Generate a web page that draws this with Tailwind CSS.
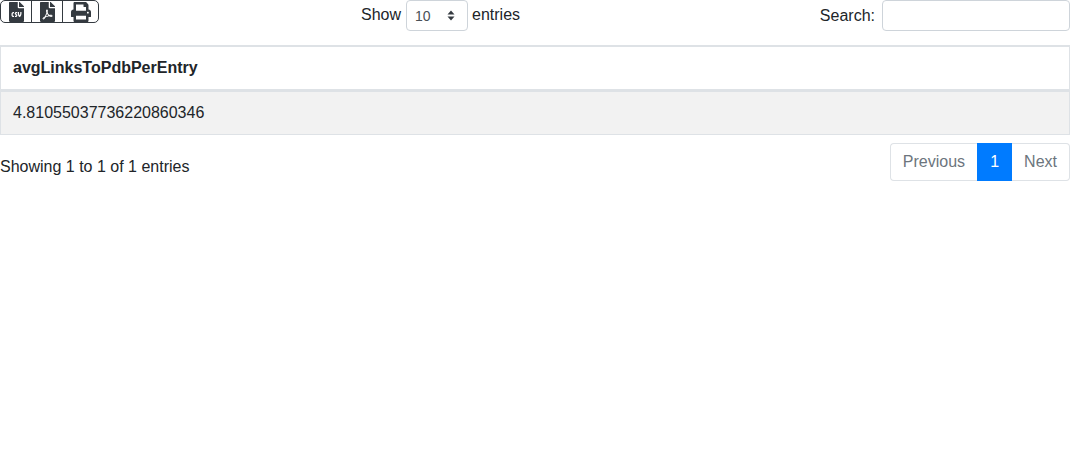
<!DOCTYPE html>
<html lang="en">
<head>
    <meta charset="UTF-8">
    <title>avgLinksToPdbPerEntry</title>
    <script src="https://cdn.jsdelivr.net/npm/@tailwindcss/browser@4"></script>
</head>
<body class="bg-white text-[#212529] font-['Liberation_Sans',Arial,sans-serif] text-base leading-6">
    <div class="w-[1070px]">
        <!-- toolbar -->
        <div class="flex h-[45px] items-start">
            <div class="w-[361px] flex">
                <div class="flex h-[23px] border border-[#343a40] rounded-[5px] overflow-hidden">
                    <button class="w-[31px] border-r border-[#343a40] flex justify-center pt-[1px]">
                        <svg class="w-[15px] h-[20px] fill-[#343a40]" viewBox="0 0 384 512"><path d="M224 136V0H24C10.7 0 0 10.7 0 24v464c0 13.3 10.7 24 24 24h336c13.3 0 24-10.7 24-24V160H248c-13.2 0-24-10.8-24-24zm-96 144c0 4.42-3.58 8-8 8h-8c-8.84 0-16 7.16-16 16v32c0 8.84 7.16 16 16 16h8c4.42 0 8 3.58 8 8v16c0 4.42-3.58 8-8 8h-8c-26.51 0-48-21.49-48-48v-32c0-26.51 21.49-48 48-48h8c4.42 0 8 3.58 8 8v16zm44.27 104H160c-4.42 0-8-3.58-8-8v-16c0-4.42 3.58-8 8-8h12.27c5.95 0 10.41-3.5 10.41-6.62 0-1.3-.75-2.66-2.12-3.84l-21.89-18.77c-8.47-7.22-13.33-17.48-13.33-28.14 0-21.3 19.02-38.62 42.41-38.62H200c4.42 0 8 3.58 8 8v16c0 4.42-3.58 8-8 8h-12.27c-5.95 0-10.41 3.5-10.41 6.62 0 1.3.75 2.66 2.12 3.84l21.89 18.77c8.47 7.22 13.33 17.48 13.33 28.14.01 21.29-19 38.62-42.39 38.62zM256 264v20.8c0 20.27 5.7 40.17 16 56.88 10.3-16.7 16-36.61 16-56.88V264c0-4.42 3.58-8 8-8h16c4.42 0 8 3.58 8 8v20.8c0 35.48-12.88 68.89-36.28 94.09-3.02 3.25-7.27 5.11-11.72 5.11s-8.7-1.86-11.72-5.11c-23.4-25.2-36.28-58.61-36.28-94.09V264c0-4.42 3.58-8 8-8h16c4.42 0 8 3.58 8 8zm121-159L279.1 7c-4.5-4.5-10.6-7-17-7H256v128h128v-6.1c0-6.3-2.5-12.4-7-16.9z"/></svg>
                    </button>
                    <button class="w-[31px] border-r border-[#343a40] flex justify-center pt-[1px]">
                        <svg class="w-[15px] h-[20px] fill-[#343a40]" viewBox="0 0 384 512"><path d="M181.9 256.1c-5-16-4.9-46.9-2-46.9 8.4 0 7.6 36.9 2 46.9zm-1.7 47.2c-7.7 20.2-17.3 43.3-28.4 62.7 18.3-7 39-17.2 62.9-21.9-12.7-9.6-24.9-23.4-34.5-40.8zM86.1 428.1c0 .8 13.2-5.4 34.9-40.2-6.7 6.3-29.1 24.5-34.9 40.2zM248 160h136v328c0 13.3-10.7 24-24 24H24c-13.3 0-24-10.7-24-24V24C0 10.7 10.7 0 24 0h200v136c0 13.2 10.8 24 24 24zm-8 171.8c-20-12.2-33.3-29-42.7-53.8 4.5-18.5 11.6-46.6 6.2-64.2-4.7-29.4-42.4-26.5-47.8-6.8-5 18.3-.4 44.1 8.1 77-11.6 27.6-28.7 64.6-40.8 85.8-.1 0-.1.1-.2.1-27.1 13.9-73.6 44.5-54.5 68 5.6 6.9 16 10 21.5 10 17.9 0 35.7-18 61.1-61.8 25.8-8.5 54.1-19.1 79-23.2 21.7 11.8 47.1 19.5 64 19.5 29.2 0 31.2-32 19.7-43.4-13.9-13.6-54.3-9.7-73.6-7.2zM377 105L279 7c-4.5-4.5-10.6-7-17-7h-6v128h128v-6.1c0-6.3-2.5-12.4-7-16.9zm-74.1 255.3c4.1-2.7-2.5-11.9-42.8-9 37.1 15.8 42.8 9 42.8 9z"/></svg>
                    </button>
                    <button class="w-[35px] flex justify-center pt-[1px]">
                        <svg class="w-[20px] h-[20px] fill-[#343a40]" viewBox="0 0 512 512"><path d="M448 192V77.25c0-8.49-3.37-16.62-9.37-22.63L393.37 9.37c-6-6-14.14-9.37-22.63-9.37H96C78.33 0 64 14.33 64 32v160c-35.35 0-64 28.65-64 64v112c0 8.84 7.16 16 16 16h48v96c0 17.67 14.33 32 32 32h320c17.67 0 32-14.33 32-32v-96h48c8.84 0 16-7.16 16-16V256c0-35.35-28.65-64-64-64zm-64 256H128v-96h256v96zm0-224H128V64h192v48c0 8.84 7.16 16 16 16h48v96zm48 72c-13.25 0-24-10.75-24-24 0-13.26 10.75-24 24-24s24 10.74 24 24c0 13.25-10.75 24-24 24z"/></svg>
                    </button>
                </div>
            </div>
            <div class="flex items-center h-[31px]">
                <span class="pb-[2px] mr-[5px]">Show</span>
                <div class="w-[62px] h-[31px] border border-[#ced4da] rounded-[4px] flex items-center justify-between pl-[8px] pr-[11px] text-sm text-[#495057]">
                    <span>10</span>
                    <svg class="w-[10px] h-[13px] fill-[#343a40]" viewBox="0 0 10 13"><path d="M5 1.5 8.5 5.5H1.5zM5 11.5 1.5 7.5H8.5z"/></svg>
                </div>
                <span class="pb-[2px] ml-[4px]">entries</span>
            </div>
            <div class="flex-1 flex items-center justify-end gap-[7px] h-[31px]">
                <span>Search:</span>
                <input type="search" class="w-[188px] h-[31px] border border-[#ced4da] rounded-[4px] bg-white">
            </div>
        </div>
        <!-- table -->
        <table class="w-full border-separate border-spacing-0">
            <thead>
                <tr>
                    <th class="h-[47px] px-3 text-left font-bold border-x border-x-[#dee2e6] border-t-2 border-t-[#dee2e6] border-b-[3px] border-b-[#dee2e6]">avgLinksToPdbPerEntry</th>
                </tr>
            </thead>
            <tbody>
                <tr class="bg-[#f2f2f2]">
                    <td class="h-[43px] px-3 border-x border-x-[#dee2e6] border-b border-b-[#dee2e6]">4.81055037736220860346</td>
                </tr>
            </tbody>
        </table>
        <!-- footer -->
        <div class="flex justify-between mt-2">
            <div class="pt-[12px]">Showing 1 to 1 of 1 entries</div>
            <div class="flex h-[38px]">
                <a class="px-3 flex items-center text-[#6c757d] border border-[#dee2e6] border-r-0 rounded-l-[4px]">Previous</a>
                <a class="w-[35px] flex items-center justify-center text-white bg-[#007bff]">1</a>
                <a class="px-3 flex items-center text-[#6c757d] border border-[#dee2e6] border-l-0 rounded-r-[4px]">Next</a>
            </div>
        </div>
    </div>
</body>
</html>
